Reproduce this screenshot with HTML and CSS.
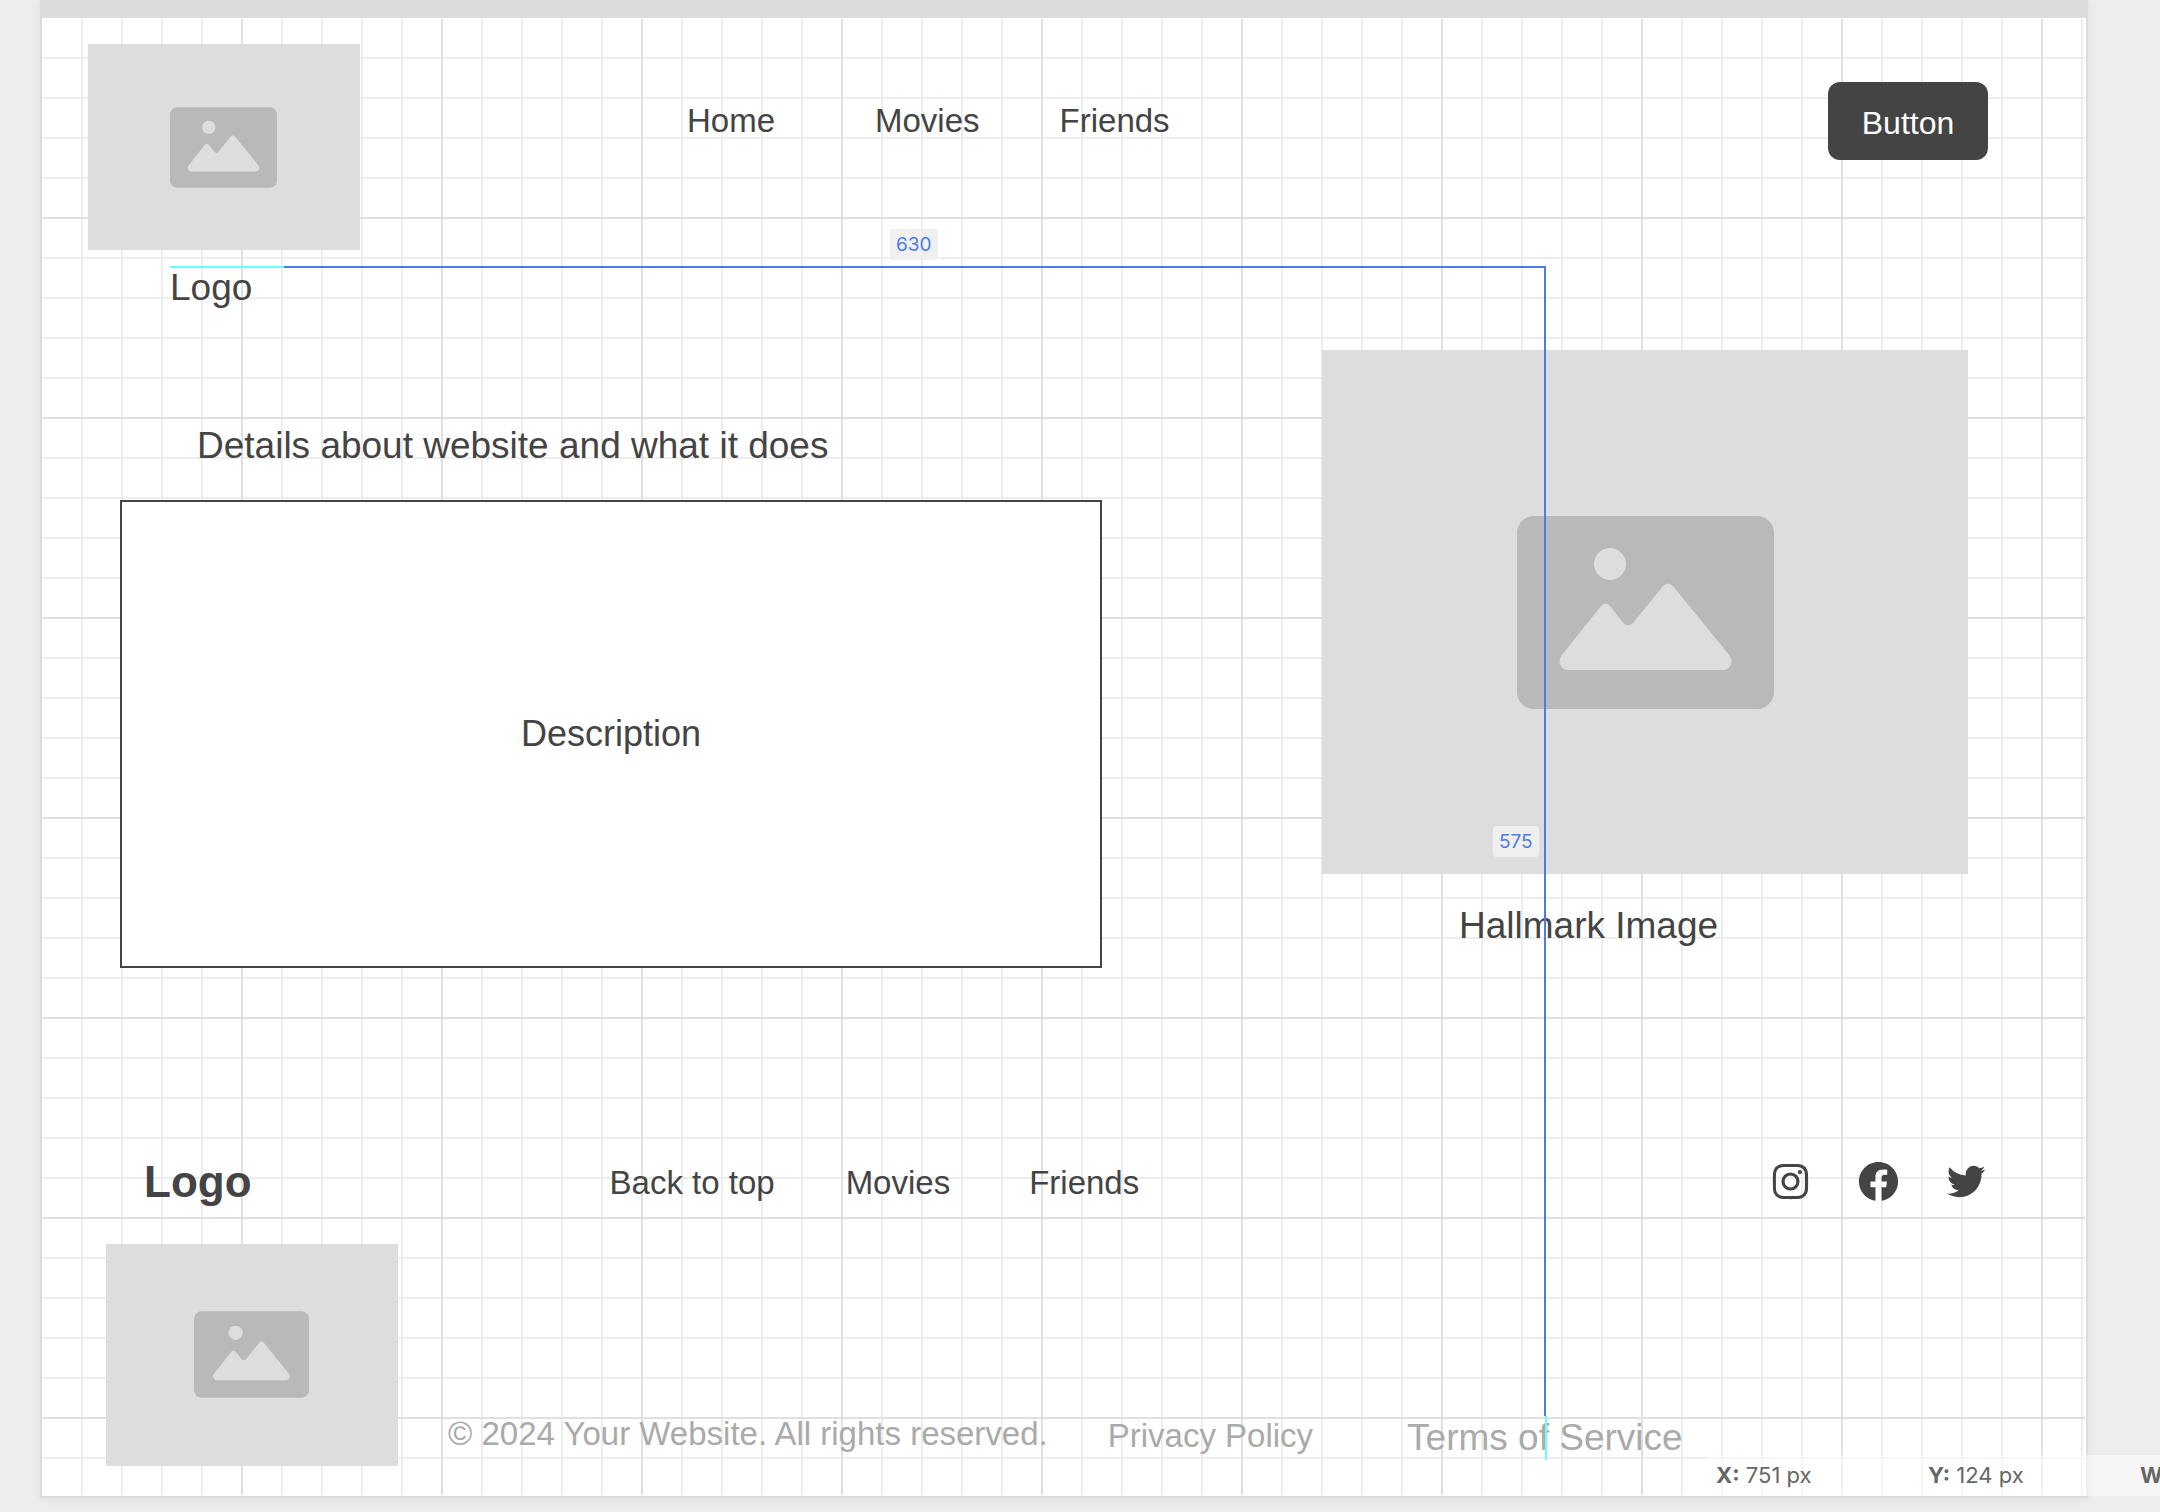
FILE: index.html
```html
<!DOCTYPE html>
<html lang="en">
<head>
<meta charset="utf-8">
<title>Wireframe</title>
<link rel="stylesheet" href="styles.css">
</head>
<body>
<svg class="defs" aria-hidden="true">
  <symbol id="picture" viewBox="0 0 257 193">
    <rect width="257" height="193" rx="17" fill="#b9b9b9"/>
    <circle cx="93" cy="48" r="16" fill="#ddd"/>
    <path fill="#ddd" d="M51 154C44 154 40 146 44.500 139.500L84 90Q88.500 85.500 93 90L106.500 107Q111 111.500 116 107L146 70Q151 65 156 70L212.500 139.500C217 146 213 154 206 154Z"/>
  </symbol>
</svg>
<div class="canvas">
  <div class="sheet">
    <div class="grid">
      <header class="header">
        <figure class="figure">
          <div class="placeholder placeholder-brand"><svg class="picture picture-brand"><use href="#picture"/></svg></div>
          <figcaption class="caption caption-brand">Logo</figcaption>
        </figure>
        <nav class="nav nav-top">
          <a href="#">Home</a>
          <a href="#">Movies</a>
          <a href="#">Friends</a>
        </nav>
        <button class="button" type="button">Button</button>
      </header>
      <main class="main">
        <section class="intro">
          <h1 class="heading">Details about website and what it does</h1>
          <div class="description">Description</div>
        </section>
        <figure class="figure">
          <div class="placeholder placeholder-hero"><svg class="picture picture-hero"><use href="#picture"/></svg></div>
          <figcaption class="caption caption-hero">Hallmark Image</figcaption>
        </figure>
      </main>
      <footer class="footer">
        <div class="footer-row">
          <strong class="logo">Logo</strong>
          <nav class="nav nav-bottom">
            <a href="#">Back to top</a>
            <a href="#">Movies</a>
            <a href="#">Friends</a>
          </nav>
          <div class="social">
            <a href="#" aria-label="Instagram"><svg viewBox="0 0 24 24"><path d="M11.999 7.377a4.623 4.623 0 1 0 0 9.248 4.623 4.623 0 0 0 0-9.248zm0 7.627a3.004 3.004 0 1 1 0-6.008 3.004 3.004 0 0 1 0 6.008z"/><circle cx="16.806" cy="7.207" r="1.078"/><path d="M20.533 6.111A4.605 4.605 0 0 0 17.9 3.479a6.606 6.606 0 0 0-2.186-.42c-.963-.042-1.268-.054-3.71-.054s-2.755 0-3.71.054a6.554 6.554 0 0 0-2.184.42 4.6 4.6 0 0 0-2.633 2.632 6.585 6.585 0 0 0-.419 2.186c-.043.962-.056 1.267-.056 3.71 0 2.442 0 2.753.056 3.71.015.748.156 1.486.419 2.187a4.61 4.61 0 0 0 2.634 2.632 6.584 6.584 0 0 0 2.185.45c.963.042 1.268.055 3.71.055s2.755 0 3.71-.055a6.615 6.615 0 0 0 2.186-.419 4.613 4.613 0 0 0 2.633-2.633c.263-.7.404-1.438.419-2.186.043-.962.056-1.267.056-3.71s0-2.753-.056-3.71a6.581 6.581 0 0 0-.421-2.217zm-1.218 9.532a5.043 5.043 0 0 1-.311 1.688 2.987 2.987 0 0 1-1.712 1.711 4.985 4.985 0 0 1-1.67.311c-.95.044-1.218.055-3.654.055-2.438 0-2.687 0-3.655-.055a4.96 4.96 0 0 1-1.669-.311 2.985 2.985 0 0 1-1.719-1.711 5.08 5.08 0 0 1-.311-1.669c-.043-.95-.053-1.218-.053-3.654 0-2.437 0-2.686.053-3.655a5.038 5.038 0 0 1 .311-1.687c.305-.789.93-1.41 1.719-1.712a5.01 5.01 0 0 1 1.669-.311c.951-.043 1.218-.055 3.655-.055s2.687 0 3.654.055a4.96 4.96 0 0 1 1.67.311 2.991 2.991 0 0 1 1.712 1.712 5.08 5.08 0 0 1 .311 1.669c.043.951.055 1.218.055 3.655 0 2.436 0 2.698-.043 3.654h-.011z"/></svg></a>
            <a href="#" aria-label="Facebook"><svg viewBox="0 0 24 24"><path d="M12.001 2.002c-5.522 0-9.999 4.477-9.999 9.999 0 4.99 3.656 9.126 8.437 9.879v-6.988h-2.54v-2.891h2.54V9.798c0-2.508 1.493-3.891 3.776-3.891 1.094 0 2.24.195 2.24.195v2.459h-1.264c-1.24 0-1.628.772-1.628 1.563v1.875h2.771l-.443 2.891h-2.328v6.988C18.344 21.129 22 16.992 22 12.001c0-5.522-4.477-9.999-9.999-9.999z"/></svg></a>
            <a href="#" aria-label="Twitter"><svg viewBox="0 0 24 24"><path d="M19.633 7.997c.013.175.013.349.013.523 0 5.325-4.053 11.461-11.46 11.461-2.282 0-4.402-.661-6.186-1.809.324.037.636.05.973.05a8.07 8.07 0 0 0 5.001-1.721 4.036 4.036 0 0 1-3.767-2.793c.249.037.499.062.761.062.361 0 .724-.05 1.061-.137a4.027 4.027 0 0 1-3.23-3.953v-.05c.537.299 1.16.486 1.82.511a4.022 4.022 0 0 1-1.796-3.354c0-.748.199-1.434.548-2.032a11.457 11.457 0 0 0 8.306 4.215c-.062-.3-.1-.611-.1-.923a4.026 4.026 0 0 1 4.028-4.028c1.16 0 2.207.486 2.943 1.272a7.957 7.957 0 0 0 2.556-.973 4.02 4.02 0 0 1-1.771 2.22 8.073 8.073 0 0 0 2.319-.624 8.645 8.645 0 0 1-2.019 2.083z"/></svg></a>
          </div>
        </div>
        <div class="footer-legal">
          <div class="placeholder placeholder-footer"><svg class="picture picture-footer"><use href="#picture"/></svg></div>
          <div class="legal">
            <span>© 2024 Your Website. All rights reserved.</span>
            <a class="privacy" href="#">Privacy Policy</a>
            <a class="terms" href="#">Terms of Service</a>
          </div>
        </div>
      </footer>
    </div>
  </div>
  <div class="guide guide-x"></div>
  <div class="guide guide-y"></div>
  <div class="guide guide-end"></div>
  <span class="measure measure-x">630</span>
  <span class="measure measure-y">575</span>
  <div class="status">
    <span><b>X:</b> 751 px</span>
    <span><b>Y:</b> 124 px</span>
    <span><b>W</b></span>
  </div>
</div>
</body>
</html>
```
FILE: styles.css
```css
* {
  box-sizing: border-box;
}

body {
  margin: 0;
  background: #ededed;
  color: #444;
  font-family: "Liberation Sans", Arial, sans-serif;
  font-size: 33px;
  line-height: 36px;
}

a {
  color: inherit;
  text-decoration: none;
}

.defs {
  position: absolute;
  width: 0;
  height: 0;
}

.canvas {
  position: relative;
  overflow: hidden;
  padding: 0 72px 14px 40px;
}

.sheet {
  border: 2px solid #dcdcdc;
  border-top-width: 18px;
  padding: 1px;
  background: #fff;
  box-shadow: 0 2px 8px rgba(0, 0, 0, 0.06);
}

.grid {
  padding: 25px 0 29px;
  background-image:
    linear-gradient(to right, transparent 198px, #e0e0e0 198px),
    linear-gradient(to bottom, transparent 198px, #e0e0e0 198px),
    linear-gradient(to right, transparent 38px, #ededed 38px),
    linear-gradient(to bottom, transparent 38px, #ededed 38px);
  background-size: 200px 200px, 200px 200px, 40px 40px, 40px 40px;
}

/* Placeholders */
.figure {
  margin: 0;
}

.placeholder {
  display: flex;
  align-items: center;
  justify-content: center;
  background: #ddd;
}

.placeholder-brand {
  width: 272px;
  height: 206px;
  padding-right: 2px;
}

.placeholder-hero {
  height: 524px;
}

.placeholder-footer {
  width: 292px;
  height: 222px;
  padding: 0 2px 2px 0;
}

.picture-brand {
  width: 107px;
  height: 81px;
}

.picture-hero {
  width: 257px;
  height: 193px;
}

.picture-footer {
  width: 115px;
  height: 87px;
}

.caption {
  font-size: 37px;
  line-height: 40px;
}

.caption-brand {
  padding: 18px 0 0 82px;
}

.caption-hero {
  padding: 32px 0 0 137px;
}

/* Header */
.header {
  display: flex;
  align-items: flex-start;
  padding: 0 97px 0 45px;
}

.nav {
  display: flex;
  white-space: nowrap;
}

.nav-top {
  gap: 80px;
  padding: 59px 0 0 327px;
}

.nav-top a:first-child {
  padding-right: 20px;
}

.button {
  width: 160px;
  height: 78px;
  margin: 38px 0 0 auto;
  padding: 4px 0 0;
  border: 0;
  border-radius: 12px;
  background: #444;
  color: #fff;
  font: inherit;
  font-size: 32px;
}

/* Main */
.main {
  display: grid;
  grid-template-columns: 982fr 646fr;
  gap: 220px;
  padding: 42px 117px 0 77px;
}

.intro {
  padding-top: 76px;
}

.heading {
  margin: 0 0 34px;
  padding-left: 77px;
  font-size: 37px;
  font-weight: 400;
  line-height: 40px;
}

.description {
  display: flex;
  align-items: center;
  justify-content: center;
  height: 468px;
  border: 2px solid #444;
  background: #fff;
  font-size: 36px;
  line-height: 40px;
}

/* Footer */
.footer {
  padding-top: 188px;
}

.footer-row {
  display: flex;
  align-items: center;
  padding: 0 95px 0 101px;
}

.logo {
  padding-top: 2px;
  font-size: 44px;
  line-height: 48px;
}

.nav-bottom {
  gap: 79px;
  padding: 4px 0 0 358px;
}

.nav-bottom a:first-child {
  margin-right: -8px;
}

.social {
  display: flex;
  gap: 41px;
  margin-left: auto;
}

.social svg {
  display: block;
  width: 47px;
  height: 47px;
  fill: #444;
}

.footer-legal {
  display: flex;
  padding: 38px 0 0 63px;
}

.legal {
  display: flex;
  align-items: flex-start;
  padding: 172px 0 0 50px;
  color: #aaa;
  white-space: nowrap;
}

.privacy {
  margin-left: 60px;
  padding-top: 2px;
}

.terms {
  margin-left: 94px;
  padding-top: 2px;
  font-size: 37px;
  line-height: 40px;
}

/* Measuring overlay */
.guide {
  position: absolute;
}

.guide-x {
  top: 266px;
  left: 170px;
  width: 1376px;
  height: 2px;
  background: linear-gradient(to right, #6ff 114px, #4d7be6 114px);
}

.guide-y {
  top: 266px;
  left: 1544px;
  width: 2px;
  height: 1150px;
  background: #4d7be6;
}

.guide-end {
  top: 1416px;
  left: 1545px;
  width: 2px;
  height: 44px;
  background: #6ff;
}

.measure {
  position: absolute;
  padding: 0 6px;
  border-radius: 4px;
  background: #f0f0f0;
  color: #4d7be6;
  font-family: Inter, sans-serif;
  font-size: 19px;
  line-height: 31px;
}

.measure-x {
  top: 229px;
  left: 890px;
}

.measure-y {
  top: 826px;
  left: 1493px;
}

.status {
  position: absolute;
  right: 0;
  bottom: 16px;
  display: grid;
  grid-template-columns: 212px 212px 20px;
  width: 453px;
  padding-left: 9px;
  overflow: hidden;
  background: rgba(255, 255, 255, 0.5);
  color: #666;
  font-family: Inter, sans-serif;
  font-size: 22px;
  line-height: 41px;
  white-space: nowrap;
}
```
